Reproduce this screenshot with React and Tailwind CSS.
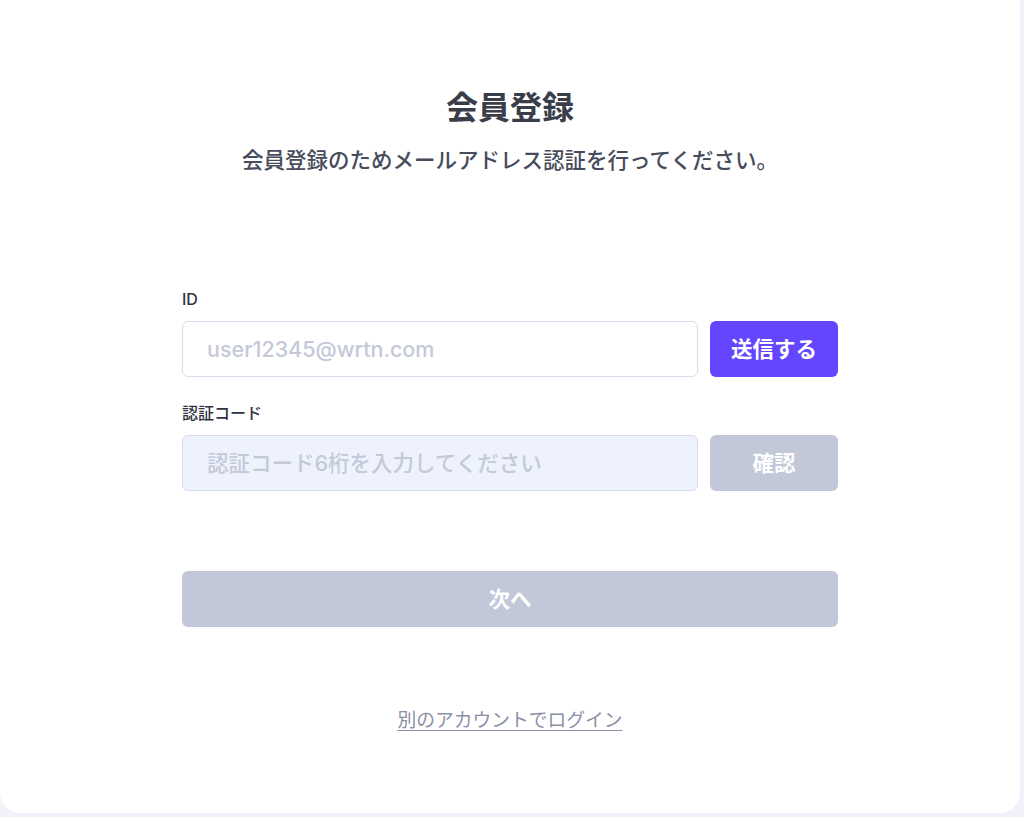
import React from 'react';

const fontStack = { fontFamily: 'Inter, "Noto Sans CJK JP", sans-serif' };

const Field = ({ label, placeholder, buttonText, active, filled }) => (
  <div className="flex flex-col">
    <label className="text-[16px] leading-5 font-medium text-[#2f3340] mb-3">{label}</label>
    <div className="flex gap-3">
      <input
        type="text"
        placeholder={placeholder}
        className={`w-[516px] h-14 rounded-md border border-[#d8dbec] px-6 text-[21.5px] font-medium outline-none placeholder:text-[#c4c9d9] ${
          filled ? 'bg-[#eef2fd]' : 'bg-white'
        }`}
      />
      <button
        className={`w-32 h-14 rounded-md text-[21.5px] font-bold text-white ${
          active ? 'bg-[#6446ff]' : 'bg-[#c3c8d8]'
        }`}
      >
        {buttonText}
      </button>
    </div>
  </div>
);

export default function App() {
  return (
    <div className="w-full h-[817px] bg-[#f1f1fa] overflow-hidden" style={fontStack}>
      <div className="w-[1020px] h-[813px] bg-white rounded-b-[20px] flex flex-col items-center">
        {/* Header */}
        <h1 className="mt-[88px] text-[32px] leading-10 font-bold text-[#3a3e4b]">会員登録</h1>
        <p className="mt-[18px] text-[21.5px] leading-7 font-medium text-[#474c5b]">
          会員登録のためメールアドレス認証を行ってください。
        </p>

        {/* Form */}
        <div className="mt-[115px] w-[656px] flex flex-col">
          <Field label="ID" placeholder="user12345@wrtn.com" buttonText="送信する" active />
          <div className="mt-[26px]">
            <Field label="認証コード" placeholder="認証コード6桁を入力してください" buttonText="確認" filled />
          </div>
          <button className="mt-20 h-14 w-full rounded-md bg-[#c3c8d8] text-[21.5px] font-bold text-white">次へ</button>
        </div>

        <a href="#" className="mt-[82px] text-[18.75px] leading-6 text-[#8a8fa6] underline underline-offset-[3px]">
          別のアカウントでログイン
        </a>
      </div>
    </div>
  );
}
